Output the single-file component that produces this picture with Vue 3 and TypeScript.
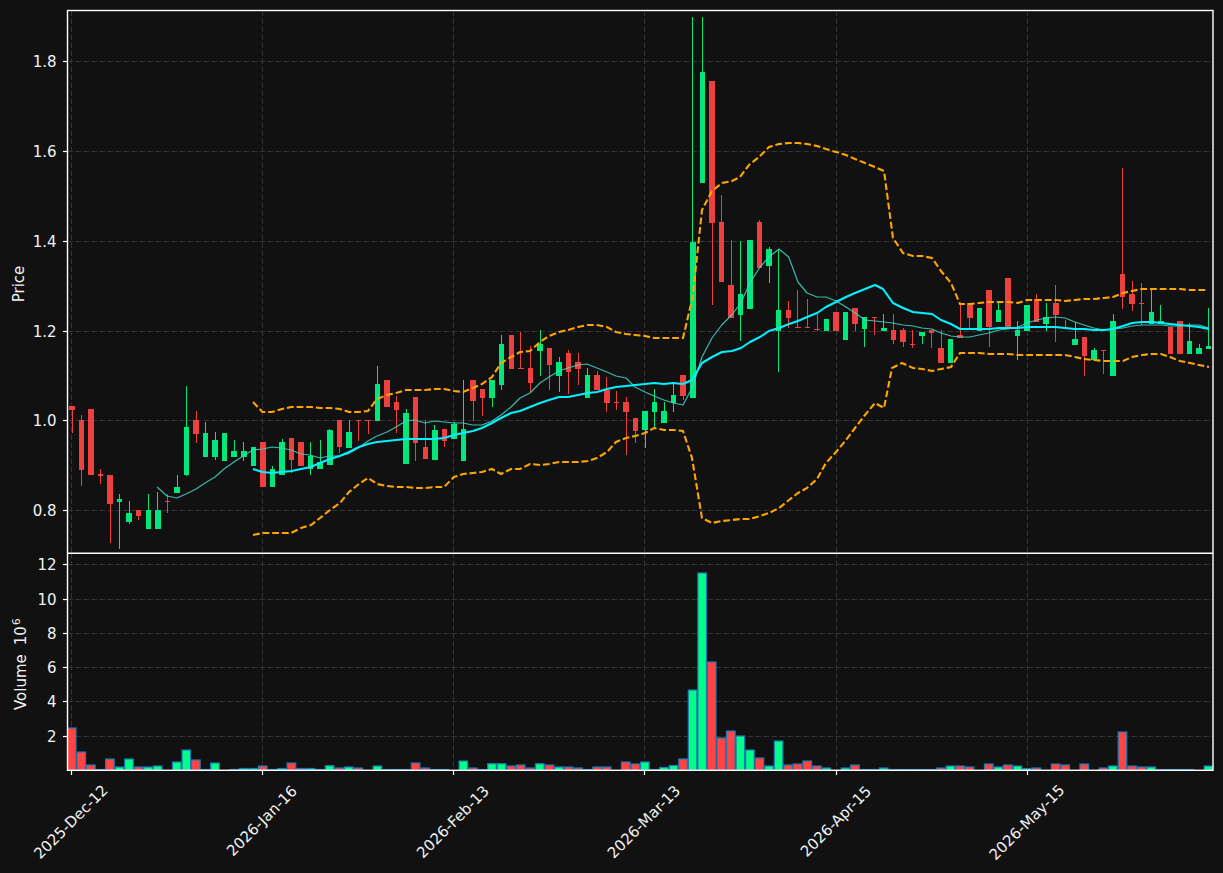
<script setup lang="ts">
type Candle = [number, number, number, number, 'u' | 'd']

const raw: Candle[] = [
  [406,410,406,433,'d'],[420,470,415,486,'d'],[409,475,409,475,'d'],[474,476,469,484,'d'],[475,504,475,543,'d'],
  [499,502,494,549,'u'],[513,522,501,524,'u'],[510,516,510,520,'d'],[510,529,494,529,'u'],[510,529,492,529,'u'],
  [501,502,494,513,'d'],[487,493,475,493,'u'],[427,475,386,476,'u'],[420,434,411,443,'d'],[433,457,422,457,'u'],
  [440,457,432,460,'u'],[433,461,433,461,'u'],[451,457,440,457,'u'],[451,457,442,461,'u'],[447,466,447,466,'u'],
  [442,487,442,487,'d'],[469,487,466,487,'u'],[442,475,439,475,'u'],[438,460,438,473,'d'],[442,466,442,466,'d'],
  [456,469,442,475,'u'],[462,469,440,469,'u'],[430,465,429,465,'u'],[420,447,420,453,'d'],[432,448,420,448,'u'],
  [420,421,420,441,'d'],[420,421,420,434,'d'],[384,421,366,421,'u'],[380,407,380,407,'d'],[402,410,396,433,'d'],
  [413,464,409,464,'u'],[397,443,397,461,'d'],[447,459,420,459,'d'],[430,460,425,460,'u'],[429,441,429,447,'d'],
  [424,439,422,439,'u'],[429,461,380,461,'u'],[380,401,380,421,'d'],[389,398,389,416,'d'],[380,398,380,407,'u'],
  [344,385,335,390,'u'],[335,369,335,369,'d'],[368,369,332,369,'d'],[368,383,346,392,'d'],[344,351,330,376,'u'],
  [348,365,348,390,'d'],[362,376,357,392,'u'],[353,372,350,394,'d'],[362,369,353,385,'d'],[375,398,368,398,'u'],
  [375,390,371,390,'d'],[390,403,377,412,'d'],[402,403,391,410,'d'],[402,412,397,455,'d'],[418,431,418,443,'d'],
  [411,430,411,448,'u'],[402,412,389,427,'u'],[411,423,402,423,'u'],[395,403,384,412,'u'],[375,396,375,400,'d'],
  [242,398,16.5,398,'u'],[72,183,16.5,183,'u'],[81,223,81,305,'d'],[222,282,195,282,'d'],[285,318,240,318,'d'],
  [294,315,241,341,'u'],[240,309,240,309,'u'],[222,268,220,268,'d'],[249,266,247,283,'u'],[310,331,250,372,'u'],
  [310,318,301,328,'d'],[327,328,290,328,'d'],[327,328,299,328,'d'],[329,330,312,331,'d'],[319,331,319,331,'u'],
  [312,331,312,331,'d'],[312,340,312,340,'u'],[308,324,308,331,'d'],[317,329,317,347,'u'],[317,318,317,335,'d'],
  [328,331,314,331,'u'],[330,340,314,344,'d'],[330,342,328,347,'d'],[344,345,330,348,'d'],[332,336,332,344,'u'],
  [330,333,330,348,'d'],[348,363,330,363,'d'],[339,363,339,363,'u'],[335,338,305,338,'d'],[303,318,303,328,'d'],
  [308,331,308,331,'u'],[290,327,290,347,'d'],[310,322,303,322,'u'],[278,327,278,327,'d'],[330,336,321,360,'u'],
  [305,331,305,331,'u'],[299,322,294,322,'d'],[317,324,303,331,'u'],[303,315,285,342,'d'],[327,328,320,328,'d'],
  [339,345,322,345,'u'],[337,356,337,376,'d'],[350,360,348,360,'u'],[350,351,350,374,'d'],[321,376,314,376,'u'],
  [274,297,168,309,'d'],[294,304,281,311,'d'],[303,304,283,325,'d'],[312,324,288,324,'u'],[321,324,305,324,'u'],
  [327,354,327,354,'d'],[321,354,321,354,'d'],[341,354,323,354,'u'],[348,354,344,354,'u'],[346,349,308,349,'u'],
]

const volumeTops: number[] = [
  728,752,765,769.5,759,767,759,767,767,766,770,762,750,760,769.5,763,770,769.5,768.5,768.5,
  766,769.5,768.5,763,768.5,768.5,769.5,765.7,768,767,768,770,766,769.5,769.5,769.5,763,768,769.5,769.5,
  770,761,768,769.5,763.7,763.7,766,765,768,763.7,765,767,767,768,769.5,767,767,770,762,764,
  762,769.5,767.5,765.5,759,690,573,662,738,731,736,750,758,766,741,765,764,761,766,768,
  770,768,765,769.5,769.5,768,769.5,769.5,769.5,769.5,769.5,768,766,766,767,770,764,767,765,766,
  768.5,768,770,764,765,770,764,770,768,766,732,766,767,767,769.5,769.5,769.5,769.5,770,766,
]

const xAt = (i: number): number => 71.5 + i * 9.5525

const candles = raw.map((c, i) => ({
  x: Math.round(xAt(i)) + 0.5,
  bodyX: xAt(i) - 2.4,
  top: c[0],
  height: c[1] - c[0],
  high: c[2],
  low: c[3],
  cls: c[4] === 'u' ? 'up' : 'down',
}))

const bars = volumeTops
  .map((top, i) => ({ x: xAt(i) - 4.1, y: top, h: 770.3 - top, cls: raw[i][4] === 'u' ? 'up' : 'down' }))
  .filter(b => b.y < 770)

const turquoise =
  '157,487 167,496 177,498 186,494 196,489 205,483 215,477 224,469 234,462 243,456 253,450 262.5,449 272,447 281.5,448 291,450 301,454 310,455 320,458 329.5,456 339,456 348,454 358,448 368,441 377,436 387,432 396,427 405.7,421 415,420 425,423 434.5,421 444,422 454,423 463,423 472.5,425 482,425 492,421 501,415 511,407 520,398 530,393 540,383 549,377 559,371 568,368 578,365 587,364 597,368 607,372 616,376 626,378 635,387 645,392 654,396 664,400 673.5,403 683,405 692.5,387 702,357 712,338 721.7,325 731.7,315 740.7,303 750,283 760,267 769,257 779,249 788.7,257 798,282 807,293 817,297 826,297 836,301 846,307 855,313 865,320 875,321 884,322 893,323 903,325 913,326 922,328 932,329 941,333 951,336 960,337 970,337 979,335 989,333 999,330 1008,329 1018,327 1027,323 1037,320 1046,318 1056,317 1065,318 1075,322 1084,325 1094,328 1104,330 1113,329 1123,328 1132,326 1142,325 1152,325 1161,325 1170,326 1180,326 1190,325 1199,325 1209,328'

const cyan =
  '253,469 262.5,472 272,473 281.5,472 291.7,471 301,469 310.7,467 320,463 330,459 339.7,456 349,452 359,447 368,444 377,442 387,441 396,440 406,439 415,439 425,439 435,439 444,438 454,435 463,433 473,431 482,428 492,423 501,418 511,413 520,411 530,407 540,403 549,400 559,397 568,397 578,395 588,393 597,392 607,389 616,387 626,386 635,385 645,384 654,383 664,384 673,383 683,384 692,380 702,363 712,357 722,352 732,351 741,348 750,342 760,337 769,331 779,328 789,324 798,321 807,317 817,313 826,307 836,302 846,297 855,293 865,289 875,285 883,289 893,303 903,308 913,312 922,313 932,314 941,320 951,324 960,329 970,329 979,329 989,329 999,328 1008,328 1018,328 1027,327 1037,327 1046,327 1056,327 1065,328 1075,329 1084,329 1094,330 1104,330 1113,329 1123,326 1132,323 1142,322 1152,322 1161,323 1170,324 1180,325 1190,326 1199,327 1209,329'

const upper =
  '253,402 262.5,412 272,412 282,409 291,407 301,407 311,407 320,408 330,408 340,409 349,412 358,412 368,411 377,399 387,395 396,393 406,390 415,390 425,390 435,389 444,389 454,391 463,392 473,388 482,384 492,377 501,363 511,357 520,352 530,351 540,342 549,336 559,332 568,330 578,327 588,325 597,325 607,327 616,332 626,334 635,335 645,336 654,338 664,338 674,338 683,338 692.7,297 702,210 712,191 722,183 732,181 740,177 749,165 759,157 769,147 779,144 789,143 798,143 807,144 817,146 826,149 836,152 846,155 855,159 865,163 875,167 884,171 893,238 903,253 913,256 922,256 932,258 941,271 951,283 960,304 970,304 979,303 989,302 999,302 1008,302 1018,303 1027,300 1037,300 1046,300 1056,300 1065,301 1075,300 1084,299 1094,299 1104,298 1113,297 1123,293 1132,291 1142,289 1152,289 1161,289 1170,289 1180,289 1190,290 1199,290 1208,290'

const lower =
  '253,535 262.5,533 272,533 282,533 291,533 301,528 311,525 320,518 330,510 340,503 349,492 359,484 368,478 377,484 387,486 396,487 406,487 415,488 425,488 435,487 444,487 454,477 463,474 473,473 482,472 492,469 501,474 511,469 520,469 530,464 540,465 549,464 559,462 568,462 578,462 588,461 597,458 607,452 616,442 626,438 635,436 645,433 654,428 664,430 674,430 683,431 692,458 702,518 712,523 722,521 732,520 741,519 750,519 760,516 769,513 779,508 789,500 798,493 807,488 817,479 826,463 836,452 846,440 855,428 865,415 875,403 884,408 892,368 902,363 913,368 922,369 932,371 941,369 951,367 960,353 970,353 979,353 989,354 999,354 1008,354 1018,355 1027,355 1037,355 1046,355 1056,355 1065,355 1075,357 1084,359 1094,360 1104,361 1113,361 1123,361 1132,357 1142,355 1152,354 1161,354 1170,357 1180,361 1190,363 1199,365 1209,367'

const xTicks = [
  { x: 71.5, label: '2025-Dec-12', cy: 822 },
  { x: 262.5, label: '2026-Jan-16', cy: 821 },
  { x: 453.5, label: '2026-Feb-13', cy: 822 },
  { x: 644.5, label: '2026-Mar-13', cy: 822 },
  { x: 836.5, label: '2026-Apr-15', cy: 821.5 },
  { x: 1027.5, label: '2026-May-15', cy: 822.5 },
]

const priceTicks = [
  { y: 61.5, label: '1.8' },
  { y: 151.5, label: '1.6' },
  { y: 241.5, label: '1.4' },
  { y: 331.5, label: '1.2' },
  { y: 420.5, label: '1.0' },
  { y: 510.5, label: '0.8' },
]

const volumeTicks = [
  { y: 564.5, label: '12' },
  { y: 599.5, label: '10' },
  { y: 633.5, label: '8' },
  { y: 667.5, label: '6' },
  { y: 701.5, label: '4' },
  { y: 736.5, label: '2' },
]
</script>

<template>
  <div class="page">
    <svg class="chart" width="1223" height="873" viewBox="0 0 1223 873">
      <defs>
        <clipPath id="priceClip"><rect x="67.5" y="10.5" width="1145.5" height="542.5" /></clipPath>
        <clipPath id="volClip"><rect x="67.5" y="553" width="1145.5" height="217.3" /></clipPath>
      </defs>

      <g class="grid">
        <line v-for="t in xTicks" :key="'gp' + t.x" :x1="t.x" :x2="t.x" y1="10.5" y2="553" />
        <line v-for="t in xTicks" :key="'gv' + t.x" :x1="t.x" :x2="t.x" y1="553" y2="770" />
        <line v-for="t in priceTicks" :key="'hp' + t.y" x1="67.5" x2="1213" :y1="t.y" :y2="t.y" />
        <line v-for="t in volumeTicks" :key="'hv' + t.y" x1="67.5" x2="1213" :y1="t.y" :y2="t.y" />
      </g>

      <g clip-path="url(#priceClip)">
        <g v-for="(c, i) in candles" :key="i" :class="c.cls">
          <line class="wick" :x1="c.x" :x2="c.x" :y1="c.high" :y2="c.low" />
          <rect class="body" :x="c.bodyX" :y="c.top" width="5.5" :height="c.height" />
        </g>
        <polyline class="turquoise" :points="turquoise" />
        <polyline class="cyan" :points="cyan" />
        <polyline class="band" :points="upper" />
        <polyline class="band" :points="lower" />
      </g>

      <g clip-path="url(#volClip)">
        <rect
          v-for="(b, i) in bars"
          :key="i"
          class="bar"
          :class="b.cls"
          :x="b.x"
          :y="b.y"
          width="8.6"
          :height="b.h"
        />
      </g>

      <g class="frame">
        <rect x="67.5" y="10.5" width="1145.5" height="759.8" />
        <line x1="67.5" x2="1213" y1="553.2" y2="553.2" />
      </g>

      <g class="ticks">
        <line v-for="t in priceTicks" :key="'tp' + t.y" x1="63" x2="67.5" :y1="t.y" :y2="t.y" />
        <line v-for="t in volumeTicks" :key="'tv' + t.y" x1="63" x2="67.5" :y1="t.y" :y2="t.y" />
        <line v-for="t in xTicks" :key="'tx' + t.x" :x1="t.x" :x2="t.x" y1="770.3" y2="775" />
      </g>

      <g class="labels">
        <text v-for="t in priceTicks" :key="'lp' + t.y" x="56.5" :y="t.y + 5.4" text-anchor="end">{{ t.label }}</text>
        <text v-for="t in volumeTicks" :key="'lv' + t.y" x="56.5" :y="t.y + 5.4" text-anchor="end">{{ t.label }}</text>
        <text
          v-for="t in xTicks"
          :key="'lx' + t.x"
          :x="t.x - 0.5"
          :y="t.cy + 5"
          text-anchor="middle"
          :transform="`rotate(-45 ${t.x - 0.5} ${t.cy})`"
        >{{ t.label }}</text>
        <text x="24" y="284" text-anchor="middle" transform="rotate(-90 24 284)">Price</text>
        <text x="26" y="710" transform="rotate(-90 26 710)">Volume<tspan dx="9">10</tspan><tspan class="sup" dy="-6" dx="1">6</tspan></text>
      </g>
    </svg>
  </div>
</template>

<style scoped>
.page {
  width: 1223px;
  height: 873px;
  background: #111111;
  overflow: hidden;
}
.chart {
  display: block;
}
.grid line {
  stroke: #333333;
  stroke-width: 1;
  stroke-dasharray: 5.5 2.5;
}
.wick {
  stroke-width: 1;
  shape-rendering: crispEdges;
}
.body {
  shape-rendering: crispEdges;
}
.up .wick {
  stroke: #00e87c;
}
.up .body {
  fill: #00e87c;
}
.down .wick {
  stroke: #ef4040;
}
.down .body {
  fill: #ef4040;
}
.turquoise {
  fill: none;
  stroke: #40d8c8;
  stroke-width: 1.2;
  stroke-opacity: 0.85;
  stroke-linejoin: round;
}
.cyan {
  fill: none;
  stroke: #00f2ff;
  stroke-width: 2.1;
  stroke-linejoin: round;
}
.band {
  fill: none;
  stroke: #ffa500;
  stroke-width: 2.1;
  stroke-dasharray: 6.8 2.9;
}
.bar {
  stroke: #1f77b4;
  stroke-width: 1.2;
}
.bar.up {
  fill: #00ff88;
}
.bar.down {
  fill: #ff4444;
}
.frame rect {
  fill: none;
  stroke: #ffffff;
  stroke-width: 1.4;
}
.frame line {
  stroke: #ffffff;
  stroke-width: 1.6;
}
.ticks line {
  stroke: #ffffff;
  stroke-width: 1.2;
}
.labels text {
  fill: #f2f2f2;
  font-family: "DejaVu Sans", sans-serif;
  font-size: 15px;
}
.labels .sup {
  font-size: 10.5px;
}
</style>

<style>
html,
body {
  margin: 0;
  background: #111111;
}
</style>
